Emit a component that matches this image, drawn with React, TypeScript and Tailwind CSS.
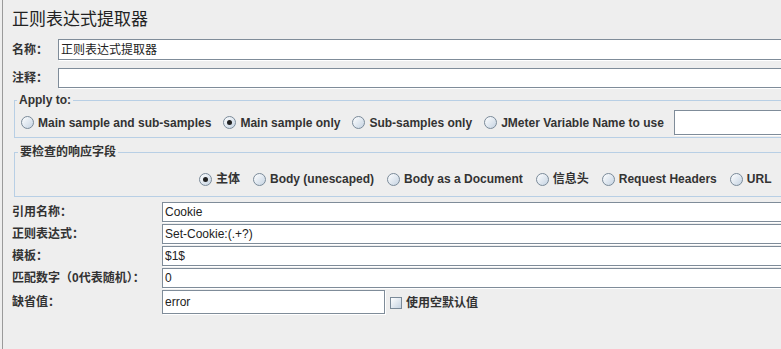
import React from "react";

const FONT = "font-['Liberation_Sans','Noto_Sans_CJK_SC',sans-serif]";

function Radio({ label, checked }: { label: string; checked?: boolean }) {
  return (
    <div className="flex items-center gap-[4px]">
      <span className="flex h-[13px] w-[13px] items-center justify-center rounded-full border border-[#7a8a99] bg-gradient-to-br from-white to-[#c5d3e2]">
        {checked && <span className="h-[5px] w-[5px] rounded-full bg-[#222]" />}
      </span>
      <span className="text-[12px] font-bold text-[#333] leading-[14px]">{label}</span>
    </div>
  );
}

function Field({ value, className }: { value?: string; className?: string }) {
  return (
    <div
      className={
        "flex items-center border border-[#7f8c99] bg-white pl-[2px] text-[12px] text-[#222] shadow-[1px_1px_0_#ffffff] " +
        (className ?? "")
      }
    >
      {value}
    </div>
  );
}

type Row = { label: string; value: string };

const rows: Row[] = [
  { label: "引用名称：", value: "Cookie" },
  { label: "正则表达式：", value: "Set-Cookie:(.+?)" },
  { label: "模板：", value: "$1$" },
  { label: "匹配数字（0代表随机）：", value: "0" },
];

export default function App() {
  return (
    <div className={`h-[349px] w-[781px] overflow-hidden bg-[#eeeeee] ${FONT}`}>
      <div className="ml-[2px] flex h-full w-[840px] flex-col border-l border-[#9a9a9a] pl-[9px] pt-[8px]">
        <h1 className="h-[24px] text-[17px] leading-[24px] text-[#222]">正则表达式提取器</h1>

        <div className="mt-[7px] flex h-[21px] items-center">
          <span className="w-[46px] text-[12px] font-bold text-[#333]">名称：</span>
          <Field value="正则表达式提取器" className="h-[21px] flex-1" />
        </div>
        <div className="mt-[8px] flex h-[20px] items-center">
          <span className="w-[46px] text-[12px] font-bold text-[#333]">注释：</span>
          <Field className="h-[20px] flex-1" />
        </div>

        <fieldset className="ml-[2px] mt-[5px] border border-[#b8cfe5] pb-[2px] pl-[6px] pt-[3px]">
          <legend className="ml-[-4px] px-[2px] text-[12px] font-bold leading-[14px] text-[#333]">
            Apply to:
          </legend>
          <div className="flex h-[25px] items-center gap-[12px]">
            <Radio label="Main sample and sub-samples" />
            <Radio label="Main sample only" checked />
            <Radio label="Sub-samples only" />
            <Radio label="JMeter Variable Name to use" />
            <Field className="ml-[-2px] h-[25px] w-[160px]" />
          </div>
        </fieldset>

        <fieldset className="ml-[2px] mt-[7px] border border-[#b8cfe5] pb-[7px] pl-[184px] pt-[10px]">
          <legend className="ml-[-181px] px-[2px] text-[12px] font-bold leading-[14px] text-[#333]">
            要检查的响应字段
          </legend>
          <div className="flex h-[20px] items-center gap-[13px]">
            <Radio label="主体" checked />
            <Radio label="Body (unescaped)" />
            <Radio label="Body as a Document" />
            <Radio label="信息头" />
            <Radio label="Request Headers" />
            <Radio label="URL" />
          </div>
        </fieldset>

        <div className="mt-[5px] flex flex-col gap-[2px]">
          {rows.map((r) => (
            <div key={r.label} className="flex h-[20px] items-center">
              <span className="w-[150px] whitespace-nowrap text-[12px] font-bold text-[#333]">{r.label}</span>
              <Field value={r.value} className="h-[20px] flex-1" />
            </div>
          ))}
          <div className="flex h-[24px] items-start">
            <span className="mt-[3px] w-[150px] text-[12px] font-bold text-[#333]">缺省值：</span>
            <Field value="error" className="h-[24px] w-[223px]" />
            <div className="ml-[5px] mt-[6px] flex items-center gap-[4px]">
              <span className="h-[12px] w-[12px] border border-[#7a8a99] bg-gradient-to-br from-white to-[#c5d3e2]" />
              <span className="text-[12px] font-bold leading-[14px] text-[#333]">使用空默认值</span>
            </div>
          </div>
        </div>
      </div>
    </div>
  );
}
